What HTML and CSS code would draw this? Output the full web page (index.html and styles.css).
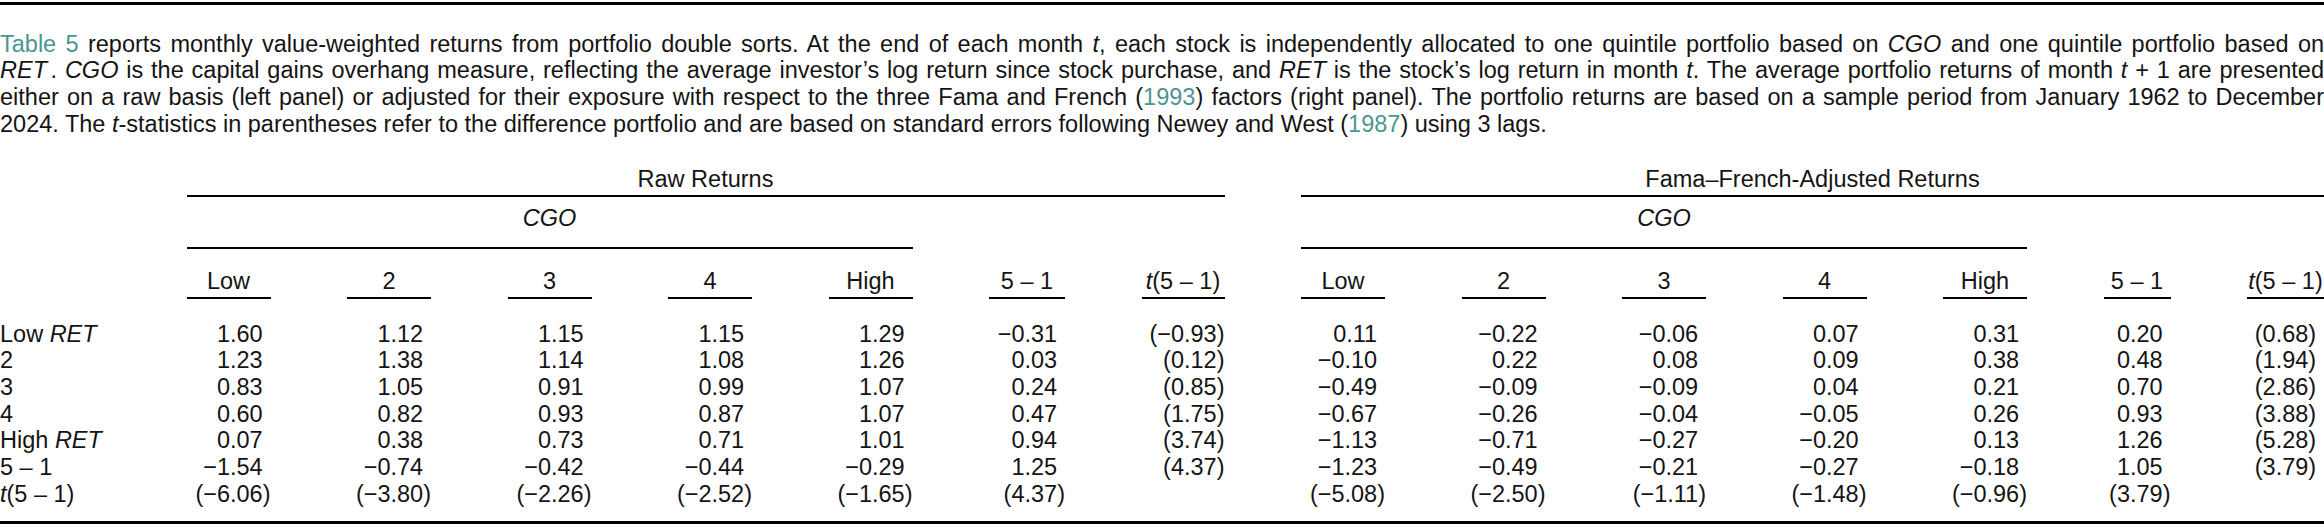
FILE: index.html
```html
<!DOCTYPE html>
<html lang="en">
<head>
<meta charset="utf-8">
<title>Table 5</title>
<link rel="stylesheet" href="styles.css">
</head>
<body>
<div class="top-rule"></div>
<p class="caption">
<span class="ln"><span class="ref">Table 5</span> reports monthly value-weighted returns from portfolio double sorts. At the end of each month <i>t</i>, each stock is independently allocated to one quintile portfolio based on <i>CGO</i> and one quintile portfolio based on</span>
<span class="ln"><i class="gap">RET</i>. <i>CGO</i> is the capital gains overhang measure, reflecting the average investor’s log return since stock purchase, and <i>RET</i> is the stock’s log return in month <i>t</i>. The average portfolio returns of month <i>t</i> + 1 are presented</span>
<span class="ln">either on a raw basis (left panel) or adjusted for their exposure with respect to the three Fama and French (<span class="ref">1993</span>) factors (right panel). The portfolio returns are based on a sample period from January 1962 to December</span>
<span class="ln last">2024. The <i>t</i>-statistics in parentheses refer to the difference portfolio and are based on standard errors following Newey and West (<span class="ref">1987</span>) using 3 lags.</span>
</p>

<div class="grid">
  <div class="row">
    <div class="blank"></div>
    <div class="panel left">Raw Returns</div>
    <div class="panel right">Fama–French-Adjusted Returns</div>
  </div>
  <div class="row">
    <div class="blank"></div>
    <div class="grp left"><i>CGO</i></div>
    <div class="blank"></div>
    <div class="grp right"><i>CGO</i></div>
    <div class="blank"></div>
  </div>
  <div class="row">
    <div class="blank"></div>
    <div class="hd">Low</div><div class="hd">2</div><div class="hd">3</div><div class="hd">4</div><div class="hd">High</div><div class="hd">5 – 1</div><div class="hd"><i>t</i>(5 – 1)</div>
    <div class="hd">Low</div><div class="hd">2</div><div class="hd">3</div><div class="hd">4</div><div class="hd">High</div><div class="hd">5 – 1</div><div class="hd"><i>t</i>(5 – 1)</div>
  </div>

  <div class="row d first">
    <div class="stub">Low <i>RET</i></div>
    <div class="v">1.60</div><div class="v">1.12</div><div class="v">1.15</div><div class="v">1.15</div><div class="v">1.29</div><div class="v">−0.31</div><div class="p">(−0.93)</div>
    <div class="v">0.11</div><div class="v">−0.22</div><div class="v">−0.06</div><div class="v">0.07</div><div class="v">0.31</div><div class="v">0.20</div><div class="c">(0.68)</div>
  </div>
  <div class="row d">
    <div class="stub">2</div>
    <div class="v">1.23</div><div class="v">1.38</div><div class="v">1.14</div><div class="v">1.08</div><div class="v">1.26</div><div class="v">0.03</div><div class="p">(0.12)</div>
    <div class="v">−0.10</div><div class="v">0.22</div><div class="v">0.08</div><div class="v">0.09</div><div class="v">0.38</div><div class="v">0.48</div><div class="c">(1.94)</div>
  </div>
  <div class="row d">
    <div class="stub">3</div>
    <div class="v">0.83</div><div class="v">1.05</div><div class="v">0.91</div><div class="v">0.99</div><div class="v">1.07</div><div class="v">0.24</div><div class="p">(0.85)</div>
    <div class="v">−0.49</div><div class="v">−0.09</div><div class="v">−0.09</div><div class="v">0.04</div><div class="v">0.21</div><div class="v">0.70</div><div class="c">(2.86)</div>
  </div>
  <div class="row d">
    <div class="stub">4</div>
    <div class="v">0.60</div><div class="v">0.82</div><div class="v">0.93</div><div class="v">0.87</div><div class="v">1.07</div><div class="v">0.47</div><div class="p">(1.75)</div>
    <div class="v">−0.67</div><div class="v">−0.26</div><div class="v">−0.04</div><div class="v">−0.05</div><div class="v">0.26</div><div class="v">0.93</div><div class="c">(3.88)</div>
  </div>
  <div class="row d">
    <div class="stub">High <i>RET</i></div>
    <div class="v">0.07</div><div class="v">0.38</div><div class="v">0.73</div><div class="v">0.71</div><div class="v">1.01</div><div class="v">0.94</div><div class="p">(3.74)</div>
    <div class="v">−1.13</div><div class="v">−0.71</div><div class="v">−0.27</div><div class="v">−0.20</div><div class="v">0.13</div><div class="v">1.26</div><div class="c">(5.28)</div>
  </div>
  <div class="row d">
    <div class="stub">5 – 1</div>
    <div class="v">−1.54</div><div class="v">−0.74</div><div class="v">−0.42</div><div class="v">−0.44</div><div class="v">−0.29</div><div class="v">1.25</div><div class="p">(4.37)</div>
    <div class="v">−1.23</div><div class="v">−0.49</div><div class="v">−0.21</div><div class="v">−0.27</div><div class="v">−0.18</div><div class="v">1.05</div><div class="c">(3.79)</div>
  </div>
  <div class="row d last">
    <div class="stub"><i>t</i>(5 – 1)</div>
    <div class="p">(−6.06)</div><div class="p">(−3.80)</div><div class="p">(−2.26)</div><div class="p">(−2.52)</div><div class="p">(−1.65)</div><div class="p">(4.37)</div><div class="p"></div>
    <div class="p">(−5.08)</div><div class="p">(−2.50)</div><div class="p">(−1.11)</div><div class="p">(−1.48)</div><div class="p">(−0.96)</div><div class="p">(3.79)</div><div class="c"></div>
  </div>
</div>
<div class="bottom-rule"></div>
</body>
</html>
```

FILE: styles.css
```css
* {
  box-sizing: border-box;
}

html, body {
  margin: 0;
  padding: 0;
  background: #ffffff;
}

body {
  width: 2324px;
  color: #141414;
  font-family: "Liberation Sans", Arial, sans-serif;
  font-size: 23.5px;
  line-height: 26.7px;
}

.top-rule {
  margin-top: 2px;
  border-top: 3px solid #000;
}

.caption {
  margin: 25.5px 0 0;
}

.ln {
  display: block;
  text-align: justify;
  text-align-last: justify;
}

.ln.last {
  text-align-last: left;
}

.gap {
  margin-right: 0.15em;
}

.ref {
  color: #4b9690;
}

.grid {
  display: grid;
  grid-template-columns: 110px repeat(5, 84px) 76px 83px repeat(5, 84px) 67px 77px;
  column-gap: 76.5px;
  margin-top: 28.2px;
}

.row {
  display: contents;
}

.panel {
  text-align: center;
  padding-bottom: 2.8px;
  border-bottom: 2px solid #000;
}

.panel.left {
  grid-column: 2 / 9;
}

.panel.right {
  grid-column: 9 / 16;
}

.grp {
  text-align: center;
  padding: 7.5px 0 15.8px;
  border-bottom: 2px solid #000;
}

.grp.left {
  grid-column: 2 / 7;
}

.grp.right {
  grid-column: 9 / 14;
}

.row > .blank:nth-child(3) {
  grid-column: 7 / 9;
}

.row > .blank:nth-child(5) {
  grid-column: 14 / 16;
}

.hd {
  text-align: center;
  padding: 18.5px 0 2.8px;
  border-bottom: 2px solid #000;
  white-space: nowrap;
}

.d > div {
  white-space: nowrap;
}

.d.first > div {
  padding-top: 21.5px;
}

.d.last > div {
  padding-bottom: 13.6px;
}

.stub {
  text-align: left;
}

.v,
.p {
  text-align: right;
}

.v::after {
  content: ")";
  visibility: hidden;
}

.c {
  text-align: center;
}

.bottom-rule {
  border-top: 3px solid #000;
}
```
